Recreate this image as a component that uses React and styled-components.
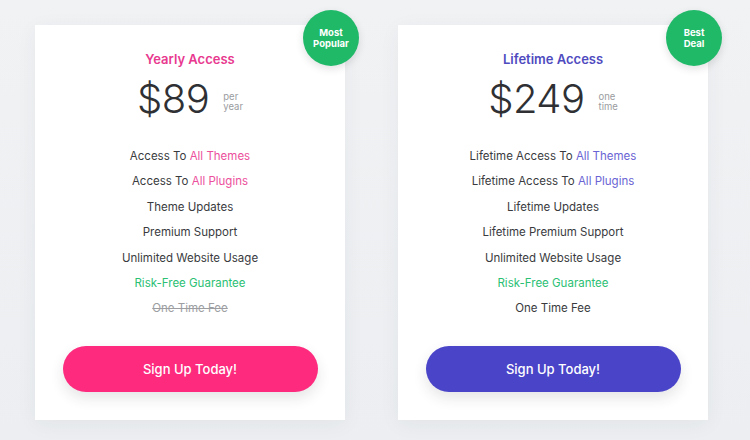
import React from "react";
import styled, { createGlobalStyle } from "styled-components";

const plans = [
  {
    name: "Yearly Access",
    price: "$89",
    unit: ["per", "year"],
    badge: ["Most", "Popular"],
    accent: "#e8398f",
    soft: "#ec4f9c",
    button: "#fd2a7e",
    features: [
      { text: "Access To ", hl: "All Themes" },
      { text: "Access To ", hl: "All Plugins" },
      { text: "Theme Updates" },
      { text: "Premium Support" },
      { text: "Unlimited Website Usage" },
      { text: "Risk-Free Guarantee", kind: "green" },
      { text: "One Time Fee", kind: "off" },
    ],
  },
  {
    name: "Lifetime Access",
    price: "$249",
    unit: ["one", "time"],
    badge: ["Best", "Deal"],
    accent: "#4f4bbf",
    soft: "#6a64d4",
    button: "#4a44c8",
    features: [
      { text: "Lifetime Access To ", hl: "All Themes" },
      { text: "Lifetime Access To ", hl: "All Plugins" },
      { text: "Lifetime Updates" },
      { text: "Lifetime Premium Support" },
      { text: "Unlimited Website Usage" },
      { text: "Risk-Free Guarantee", kind: "green" },
      { text: "One Time Fee" },
    ],
  },
];

const App = () => {
  return (
    <>
      <GlobalStyle />
      <Page>
        {plans.map(plan => (
          <Card key={plan.name}>
            <Badge>
              {plan.badge[0]}
              <br />
              {plan.badge[1]}
            </Badge>
            <Title $color={plan.accent}>{plan.name}</Title>
            <PriceRow>
              <Amount>{plan.price}</Amount>
              <Unit>
                {plan.unit[0]}
                <br />
                {plan.unit[1]}
              </Unit>
            </PriceRow>
            <Features>
              {plan.features.map(f => (
                <Feature key={f.text + (f.hl || "")} $kind={f.kind}>
                  {f.text}
                  {f.hl && <Highlight $color={plan.soft}>{f.hl}</Highlight>}
                </Feature>
              ))}
            </Features>
            <Button $bg={plan.button}>Sign Up Today!</Button>
          </Card>
        ))}
      </Page>
    </>
  );
};

const GlobalStyle = createGlobalStyle`
  body {
    margin: 0;
    background: #eef0f2;
    font-family: Inter, "Noto Sans", sans-serif;
  }
`;

const Page = styled.div`
  width: 750px;
  height: 440px;
  box-sizing: border-box;
  padding: 25px 0 0 35px;
  display: flex;
  gap: 53px;
  background: linear-gradient(180deg, #f1f2f4 0%, #eceef1 100%);
`;

const Card = styled.div`
  position: relative;
  width: 310px;
  height: 395px;
  box-sizing: border-box;
  padding: 26px 0 28px;
  background: #fff;
  display: flex;
  flex-direction: column;
  align-items: center;
  box-shadow: 0 4px 20px rgba(40, 50, 70, 0.05);
`;

const Badge = styled.div`
  position: absolute;
  top: -15px;
  right: -14px;
  width: 56px;
  height: 56px;
  border-radius: 50%;
  background: #1fb968;
  color: #fff;
  font-size: 9.5px;
  font-weight: 700;
  line-height: 11px;
  display: flex;
  align-items: center;
  justify-content: center;
  text-align: center;
  box-shadow: 0 3px 8px rgba(0, 0, 0, 0.12);
`;

const Title = styled.div`
  font-size: 13px;
  font-weight: 600;
  line-height: 16px;
  color: ${p => p.$color};
`;

const PriceRow = styled.div`
  margin-top: 10px;
  display: flex;
  align-items: center;
  gap: 14px;
`;

const Amount = styled.div`
  font-size: 40px;
  font-weight: 300;
  line-height: 44px;
  color: #2f3033;
  letter-spacing: -0.5px;
`;

const Unit = styled.div`
  font-size: 9.5px;
  line-height: 10px;
  color: #9a9ca0;
  margin-top: 6px;
`;

const Features = styled.div`
  margin-top: 23px;
  display: flex;
  flex-direction: column;
  align-items: center;
`;

const Feature = styled.div`
  font-size: 11.5px;
  line-height: 25.4px;
  color: ${p => (p.$kind === "green" ? "#2cc074" : p.$kind === "off" ? "#9c9ea2" : "#3a3b3e")};
  text-decoration: ${p => (p.$kind === "off" ? "line-through" : "none")};
`;

const Highlight = styled.span`
  color: ${p => p.$color};
`;

const Button = styled.button`
  margin-top: auto;
  width: 255px;
  height: 46px;
  border: none;
  border-radius: 23px;
  background: ${p => p.$bg};
  color: #fff;
  font-family: Inter, "Noto Sans", sans-serif;
  font-size: 13px;
  font-weight: 500;
  box-shadow: 0 6px 14px rgba(40, 40, 60, 0.12);
  cursor: pointer;
`;

export default App;
